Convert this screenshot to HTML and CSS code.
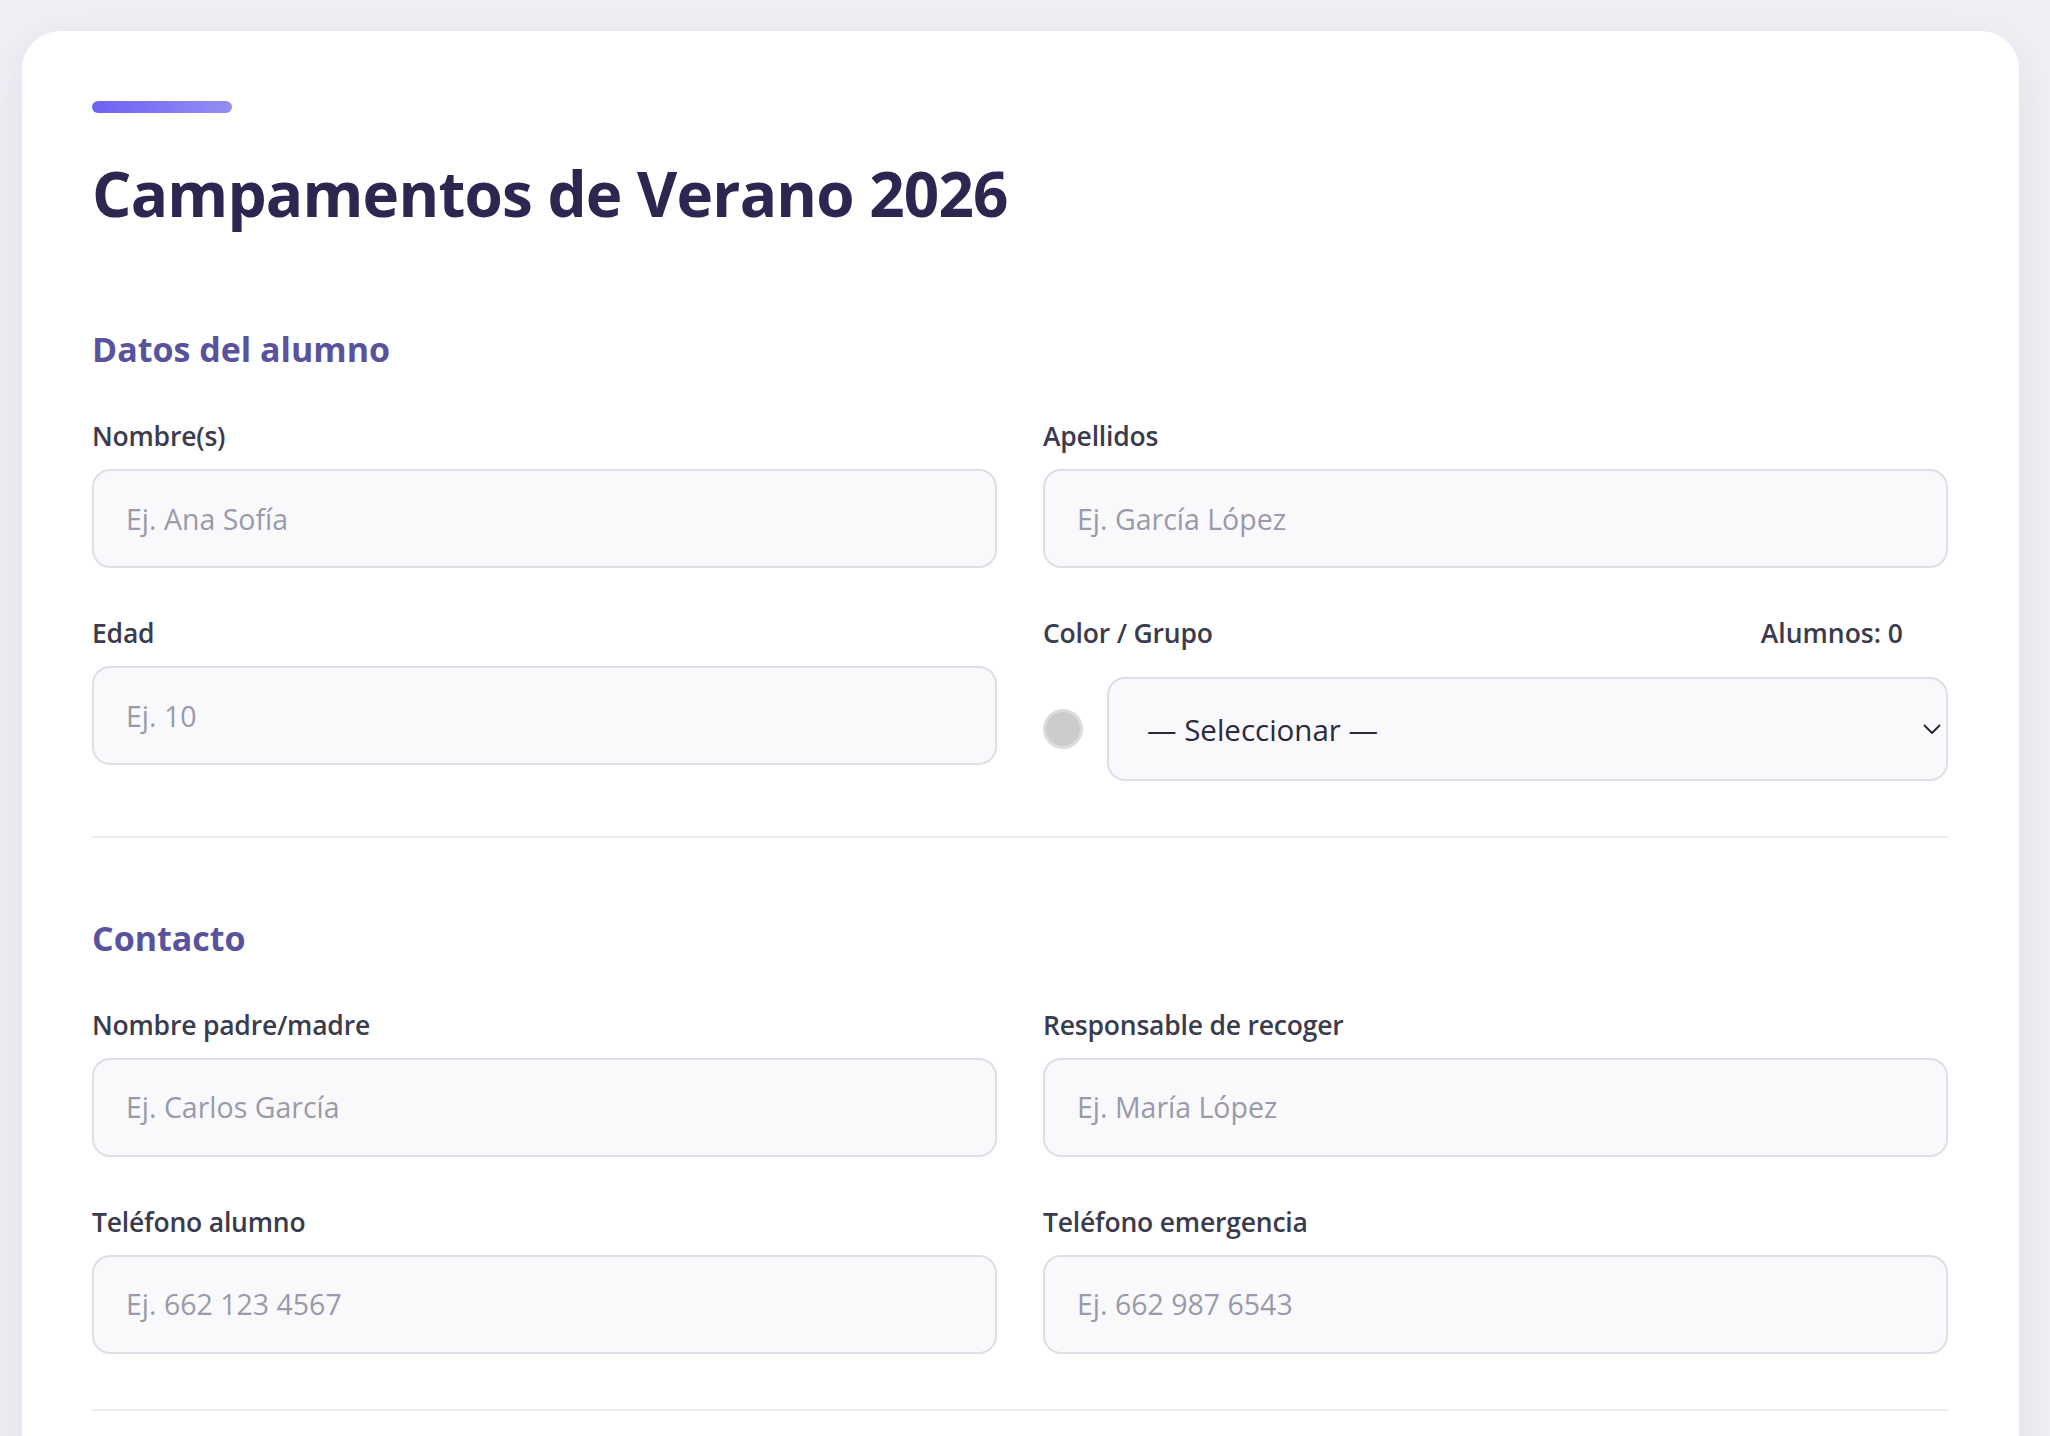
FILE: index.html
```html
<!DOCTYPE html>
<html lang="es">
<head>
<meta charset="utf-8">
<title>Campamentos de Verano 2026</title>
<link rel="stylesheet" href="styles.css">
</head>
<body>
<main class="card">
  <header class="card-head">
    <div class="accent"></div>
    <h1 class="title">Campamentos de Verano 2026</h1>
  </header>

  <section class="section">
    <h2 class="section-title">Datos del alumno</h2>
    <div class="grid">
      <div class="field">
        <label class="label">Nombre(s)</label>
        <input class="input" type="text" placeholder="Ej. Ana Sofía">
      </div>
      <div class="field">
        <label class="label">Apellidos</label>
        <input class="input" type="text" placeholder="Ej. García López">
      </div>
      <div class="field">
        <label class="label">Edad</label>
        <input class="input" type="text" placeholder="Ej. 10">
      </div>
      <div class="field">
        <div class="label-row">
          <label class="label">Color / Grupo</label>
          <span class="count">Alumnos: 0</span>
        </div>
        <div class="color-row">
          <span class="swatch"></span>
          <div class="select-wrap">
            <select class="select">
              <option>— Seleccionar —</option>
            </select>
            <svg class="chev" width="18" height="11" viewBox="0 0 18 11" aria-hidden="true">
              <path d="M1.5 1.5 L9 9 L16.5 1.5" fill="none" stroke="#2a2a3a" stroke-width="2" stroke-linecap="round" stroke-linejoin="round"/>
            </svg>
          </div>
        </div>
      </div>
    </div>
  </section>

  <section class="section">
    <h2 class="section-title">Contacto</h2>
    <div class="grid">
      <div class="field">
        <label class="label">Nombre padre/madre</label>
        <input class="input" type="text" placeholder="Ej. Carlos García">
      </div>
      <div class="field">
        <label class="label">Responsable de recoger</label>
        <input class="input" type="text" placeholder="Ej. María López">
      </div>
      <div class="field">
        <label class="label">Teléfono alumno</label>
        <input class="input" type="text" placeholder="Ej. 662 123 4567">
      </div>
      <div class="field">
        <label class="label">Teléfono emergencia</label>
        <input class="input" type="text" placeholder="Ej. 662 987 6543">
      </div>
    </div>
  </section>
</main>
</body>
</html>
```

FILE: styles.css
```css
* {
  box-sizing: border-box;
}

html,
body {
  height: 1436px;
  overflow: hidden;
}

body {
  margin: 0;
  padding: 31px 31px 0 22px;
  background: #eff0f5;
  font-family: "Open Sans", "Noto Sans", sans-serif;
  color: #3b3b4e;
}

.card {
  background: #ffffff;
  border-radius: 38px 38px 0 0;
  padding: 70px 71px 200px 70px;
  box-shadow: 0 10px 40px rgba(40, 40, 90, 0.08);
  min-height: 1600px;
}

.card-head {
  margin-bottom: 19px;
}

.accent {
  width: 140px;
  height: 12px;
  border-radius: 6px;
  background: linear-gradient(90deg, #6c63f0, #928ef3);
  margin-bottom: 43px;
}

.title {
  margin: 0;
  font-size: 62px;
  line-height: 1.2;
  font-weight: 700;
  letter-spacing: -0.8px;
  color: #2b2750;
}

.section {
  padding: 80px 0 55px;
  border-bottom: 2px solid #ebebf1;
}

.section-title {
  margin: 0 0 50px;
  font-size: 34px;
  line-height: 1.2;
  font-weight: 700;
  color: #59539e;
}

.grid {
  display: grid;
  grid-template-columns: 1fr 1fr;
  column-gap: 46px;
  row-gap: 49px;
}

.field {
  display: flex;
  flex-direction: column;
}

.label {
  display: block;
  font-size: 26.5px;
  line-height: 32px;
  font-weight: 600;
  letter-spacing: -0.2px;
  color: #3b3b4e;
  margin-bottom: 17px;
}

.label-row {
  display: flex;
  justify-content: space-between;
  align-items: flex-start;
  margin-bottom: 11px;
}

.count {
  font-size: 26.5px;
  line-height: 32px;
  font-weight: 600;
  color: #3b3b4e;
  margin-right: 45px;
}

.input {
  width: 100%;
  height: 99px;
  padding: 0 32px;
  border: 2px solid #dedee6;
  border-radius: 18px;
  background: #f9f9fc;
  font-family: inherit;
  font-size: 28.5px;
  color: #2a2a3a;
  outline: none;
}

.input::placeholder {
  color: #9a9aaa;
}

.color-row {
  display: flex;
  align-items: center;
  gap: 24px;
}

.swatch {
  flex: none;
  width: 40px;
  height: 40px;
  border-radius: 50%;
  background: #cccccc;
  border: 3px solid #dcdcdc;
}

.select-wrap {
  position: relative;
  flex: 1;
}

.select {
  display: block;
  width: 100%;
  height: 104px;
  padding: 0 60px 0 38px;
  border: 2px solid #dedee6;
  border-radius: 18px;
  background: #f9f9fc;
  font-family: inherit;
  font-size: 29.5px;
  color: #2a2a3a;
  appearance: none;
  -webkit-appearance: none;
  outline: none;
}

.chev {
  position: absolute;
  right: 7px;
  top: 47px;
  pointer-events: none;
}
```
